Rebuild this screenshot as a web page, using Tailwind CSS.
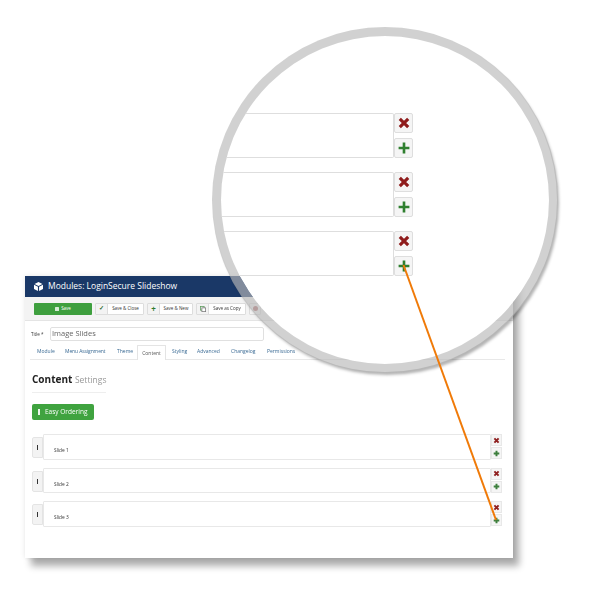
<!DOCTYPE html>
<html lang="en">
<head>
    <meta charset="UTF-8">
    <title>Modules: LoginSecure Slideshow</title>
    <script src="https://cdn.jsdelivr.net/npm/@tailwindcss/browser@4"></script>
</head>
<body class="bg-white font-['Open_Sans',sans-serif] antialiased">
<div class="relative w-[600px] h-[600px] overflow-hidden bg-white">

    <!-- Screenshot panel -->
    <div class="absolute left-[25px] top-[276px] w-[488px] h-[282px] bg-white shadow-[6px_8px_7px_rgba(0,0,0,0.33),0_0_5px_rgba(0,0,0,0.1)] flex flex-col blur-[0.3px]">
        <!-- Header -->
        <div class="h-[21px] bg-[#1a3867] flex items-center pl-[9px] gap-[5px] shrink-0">
            <svg class="w-[9px] h-[9px]" viewBox="0 0 16 16"><path fill="#fff" d="M8 0 15 3.5 8 7 1 3.5zM0 5l7 3.5V16L0 12.5zM16 5 9 8.5V16l7-3.500z"/></svg>
            <span class="text-[8.5px] leading-none text-white">Modules: LoginSecure Slideshow</span>
        </div>
        <!-- Toolbar -->
        <div class="h-[24px] bg-[#f3f3f3] border-b border-[#e4e4e4] flex items-center pl-[9px] gap-[3px] shrink-0">
            <div class="w-[58px] h-[12px] bg-[#3e9f3e] rounded-[1px] flex items-center justify-center gap-[2px] text-[4.5px] text-white">
                <svg class="w-[4px] h-[4px]" viewBox="0 0 8 8"><rect width="8" height="8" rx="1" fill="#d6ecd6"/></svg>Save
            </div>
            <div class="w-[49px] h-[12px] bg-white border border-[#ddd] rounded-[1px] flex items-center text-[4.5px] text-[#333]">
                <span class="w-[12px] h-full bg-[#f3f3f3] border-r border-[#ddd] flex items-center justify-center text-[6px] font-bold text-[#2f6b2f]">✓</span>
                <span class="flex-1 text-center">Save &amp; Close</span>
            </div>
            <div class="w-[46px] h-[12px] bg-white border border-[#ddd] rounded-[1px] flex items-center text-[4.5px] text-[#333]">
                <span class="w-[12px] h-full bg-[#f3f3f3] border-r border-[#ddd] flex items-center justify-center text-[8px] font-bold text-[#2f7a2f]">+</span>
                <span class="flex-1 text-center">Save &amp; New</span>
            </div>
            <div class="w-[50px] h-[12px] bg-white border border-[#ddd] rounded-[1px] flex items-center text-[4.5px] text-[#333]">
                <span class="w-[12px] h-full bg-[#f3f3f3] border-r border-[#ddd] flex items-center justify-center">
                    <svg class="w-[6px] h-[6px]" viewBox="0 0 8 8"><rect x=".5" y=".5" width="5" height="5" fill="none" stroke="#5a9a5a"/><rect x="2.500" y="2.500" width="5" height="5" fill="#fff" stroke="#777"/></svg>
                </span>
                <span class="flex-1 text-center">Save as Copy</span>
            </div>
            <div class="w-[12px] h-[12px] bg-[#f3f3f3] border border-[#ddd] rounded-[1px] flex items-center justify-center">
                <span class="w-[5px] h-[5px] rounded-full bg-[#b06a6a]"></span>
            </div>
        </div>
        <!-- Title -->
        <div class="flex items-center mt-[6px] pl-[6px] shrink-0">
            <span class="w-[19px] text-[4.5px] text-[#333]">Title *</span>
            <div class="w-[214px] h-[14px] border border-[#e0e0e0] rounded-[2px] pl-[1px] flex items-center text-[7.5px] text-[#666]">Image Slides</div>
        </div>
        <!-- Tabs -->
        <div class="flex items-end h-[15px] mt-[4px] ml-[5px] mr-[8px] pl-[1px] border-b border-[#e8e8e8] text-[5px] text-[#3a6a94] shrink-0">
            <span class="w-[33px] pl-[6px] pb-[4px]">Module</span>
            <span class="w-[52px] pl-[1px] pb-[4px] tracking-[-0.02em]">Menu Assignment</span>
            <span class="w-[21px] pl-[1px] pb-[4px]">Theme</span>
            <span class="w-[29px] h-[15px] -mb-px bg-white border border-b-0 border-[#e4e4e4] rounded-t-[1px] text-[#555] text-center leading-[15px]">Content</span>
            <span class="w-[25px] pl-[6px] pb-[4px]">Styling</span>
            <span class="w-[34px] ml-[6px] pb-[4px]">Advanced</span>
            <span class="w-[36px] pb-[4px]">Changelog</span>
            <span class="pb-[4px]">Permissions</span>
        </div>
        <!-- Heading -->
        <div class="w-[74px] ml-[7px] mt-[12px] pb-[5px] border-b border-[#eee] whitespace-nowrap text-[10px] leading-[14px] shrink-0">
            <span class="font-bold text-[#222]">Content</span> <span class="text-[8.5px] text-[#999]">Settings</span>
        </div>
        <!-- Easy ordering -->
        <div class="w-[62px] h-[16px] ml-[7px] mt-[11px] bg-[#3fa33f] rounded-[2px] flex items-center pl-[6px] gap-[5px] text-[6.5px] text-white shrink-0">
            <span class="w-[2px] h-[6px] bg-white/90"></span>Easy Ordering
        </div>
        <!-- Slides -->
        <div class="flex flex-col gap-[8px] mt-[14px] ml-[7px] w-[470px] shrink-0">
            <div class="flex h-[25.5px]">
                <div class="w-[11px] h-[21px] mt-[3px] bg-[#f3f3f3] border border-[#e4e4e4] rounded-l-[2px] flex items-center justify-center"><span class="w-[1px] h-[5px] bg-[#333]"></span></div>
                <div class="w-[448px] border border-[#e8e8e8] rounded-[1px] pl-[10px] pt-[12px] text-[4.8px] font-medium text-[#333]">Slide 1</div>
                <div class="w-[11px] flex flex-col gap-[1px]">
                    <div class="h-[12px] bg-[#f5f5f5] border border-[#e8e8e8] flex items-center justify-center"><svg class="w-[7px] h-[7px]" viewBox="0 0 10 10"><path d="M2 2l6 6M8 2 2 8" stroke="#8f1f1f" stroke-width="2.800"/></svg></div>
                    <div class="h-[12px] bg-[#f5f5f5] border border-[#e8e8e8] flex items-center justify-center"><svg class="w-[7px] h-[7px]" viewBox="0 0 10 10"><path d="M5 1v8M1 5h8" stroke="#3d7f3d" stroke-width="2.800"/></svg></div>
                </div>
            </div>
            <div class="flex h-[25.5px]">
                <div class="w-[11px] h-[21px] mt-[3px] bg-[#f3f3f3] border border-[#e4e4e4] rounded-l-[2px] flex items-center justify-center"><span class="w-[1px] h-[5px] bg-[#333]"></span></div>
                <div class="w-[448px] border border-[#e8e8e8] rounded-[1px] pl-[10px] pt-[12px] text-[4.8px] font-medium text-[#333]">Slide 2</div>
                <div class="w-[11px] flex flex-col gap-[1px]">
                    <div class="h-[12px] bg-[#f5f5f5] border border-[#e8e8e8] flex items-center justify-center"><svg class="w-[7px] h-[7px]" viewBox="0 0 10 10"><path d="M2 2l6 6M8 2 2 8" stroke="#8f1f1f" stroke-width="2.800"/></svg></div>
                    <div class="h-[12px] bg-[#f5f5f5] border border-[#e8e8e8] flex items-center justify-center"><svg class="w-[7px] h-[7px]" viewBox="0 0 10 10"><path d="M5 1v8M1 5h8" stroke="#3d7f3d" stroke-width="2.800"/></svg></div>
                </div>
            </div>
            <div class="flex h-[25.5px]">
                <div class="w-[11px] h-[21px] mt-[3px] bg-[#f3f3f3] border border-[#e4e4e4] rounded-l-[2px] flex items-center justify-center"><span class="w-[1px] h-[5px] bg-[#333]"></span></div>
                <div class="w-[448px] border border-[#e8e8e8] rounded-[1px] pl-[10px] pt-[12px] text-[4.8px] font-medium text-[#333]">Slide 3</div>
                <div class="w-[11px] flex flex-col gap-[1px]">
                    <div class="h-[12px] bg-[#f5f5f5] border border-[#e8e8e8] flex items-center justify-center"><svg class="w-[7px] h-[7px]" viewBox="0 0 10 10"><path d="M2 2l6 6M8 2 2 8" stroke="#8f1f1f" stroke-width="2.800"/></svg></div>
                    <div class="h-[12px] bg-[#f5f5f5] border border-[#e8e8e8] flex items-center justify-center"><svg class="w-[7px] h-[7px]" viewBox="0 0 10 10"><path d="M5 1v8M1 5h8" stroke="#3d7f3d" stroke-width="2.800"/></svg></div>
                </div>
            </div>
        </div>
    </div>

    <!-- Magnifier -->
    <div class="absolute left-[212px] top-[27px] w-[346px] h-[346px] rounded-full bg-white border-[9px] border-[#b8b8b8]/65 bg-clip-padding shadow-[2px_3px_3px_-1px_rgba(0,0,0,0.3)] overflow-hidden">
        <div class="flex flex-col gap-[14px] mt-[77px] w-[192px]">
            <div class="flex h-[45px]">
                <div class="flex-1 border border-[#dedede] border-l-0 rounded-r-[2px]"></div>
                <div class="w-[19px] flex flex-col justify-between">
                    <div class="h-[20px] bg-[#f5f5f5] border border-[#dedede] rounded-[2px] flex items-center justify-center"><svg class="w-[12px] h-[12px]" viewBox="0 0 10 10"><path d="M1.500 1.500l7 7M8.500 1.500l-7 7" stroke="#8f1c1c" stroke-width="2.600"/></svg></div>
                    <div class="h-[20px] bg-[#f5f5f5] border border-[#dedede] rounded-[2px] flex items-center justify-center"><svg class="w-[12px] h-[12px]" viewBox="0 0 10 10"><path d="M5 .5v9M.5 5h9" stroke="#2f7f2f" stroke-width="2.200"/></svg></div>
                </div>
            </div>
            <div class="flex h-[45px]">
                <div class="flex-1 border border-[#dedede] border-l-0 rounded-r-[2px]"></div>
                <div class="w-[19px] flex flex-col justify-between">
                    <div class="h-[20px] bg-[#f5f5f5] border border-[#dedede] rounded-[2px] flex items-center justify-center"><svg class="w-[12px] h-[12px]" viewBox="0 0 10 10"><path d="M1.500 1.500l7 7M8.500 1.500l-7 7" stroke="#8f1c1c" stroke-width="2.600"/></svg></div>
                    <div class="h-[20px] bg-[#f5f5f5] border border-[#dedede] rounded-[2px] flex items-center justify-center"><svg class="w-[12px] h-[12px]" viewBox="0 0 10 10"><path d="M5 .5v9M.5 5h9" stroke="#2f7f2f" stroke-width="2.200"/></svg></div>
                </div>
            </div>
            <div class="flex h-[45px]">
                <div class="flex-1 border border-[#dedede] border-l-0 rounded-r-[2px]"></div>
                <div class="w-[19px] flex flex-col justify-between">
                    <div class="h-[20px] bg-[#f5f5f5] border border-[#dedede] rounded-[2px] flex items-center justify-center"><svg class="w-[12px] h-[12px]" viewBox="0 0 10 10"><path d="M1.500 1.500l7 7M8.500 1.500l-7 7" stroke="#8f1c1c" stroke-width="2.600"/></svg></div>
                    <div class="h-[20px] bg-[#f5f5f5] border border-[#dedede] rounded-[2px] flex items-center justify-center"><svg class="w-[12px] h-[12px]" viewBox="0 0 10 10"><path d="M5 .5v9M.5 5h9" stroke="#2f7f2f" stroke-width="2.200"/></svg></div>
                </div>
            </div>
        </div>
    </div>

    <!-- Pointer line -->
    <svg class="absolute inset-0 w-[600px] h-[600px] pointer-events-none" viewBox="0 0 600 600">
        <path d="M403.500 265 496 520" stroke="#f07a08" stroke-width="2" fill="none"/>
    </svg>
</div>
</body>
</html>
